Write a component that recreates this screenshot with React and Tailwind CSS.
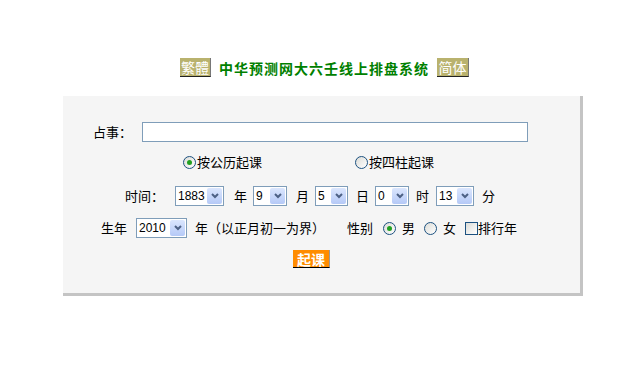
import React from 'react';

// little XP-style dropdown, drawn by hand
function Select({ value, width }) {
  return (
    <div
      className="flex h-[20px] items-center justify-between border border-[#7f9db9] bg-white pl-[2px] pr-[1px]"
      style={{ width }}
    >
      <span className="text-[12px] leading-none text-black [font-family:'Liberation_Sans',sans-serif]">{value}</span>
      <span className="flex h-[16px] w-[15px] items-center justify-center rounded-[2px] bg-gradient-to-b from-[#dbe6fd] to-[#b5c9f7]">
        <svg width="8" height="6" viewBox="0 0 8 6">
          <path d="M1 1 L4 4 L7 1" fill="none" stroke="#4d6185" strokeWidth="2" />
        </svg>
      </span>
    </div>
  );
}

function Radio({ checked }) {
  return (
    <span className="flex h-[13px] w-[13px] items-center justify-center rounded-full border border-[#1c5180] bg-gradient-to-br from-[#dcdcd7] to-white">
      {checked && <span className="h-[5px] w-[5px] rounded-full bg-[#21a121]" />}
    </span>
  );
}

export default function App() {
  return (
    <div className="h-[384px] w-[640px] bg-white pt-[58px] text-[13px] text-black [font-family:'Noto_Sans_CJK_SC',sans-serif]">
      {/* title */}
      <div className="flex h-[19px] items-center pl-[180px]">
        <span className="flex h-[19px] w-[31px] items-center justify-center border-b border-r border-b-[#222] border-r-[#777] bg-[#b9b26e] text-[14px] leading-none text-white">繁體</span>
        <span className="ml-[8px] text-[14px] font-bold leading-none tracking-[1px] text-[#008000]">中华预测网大六壬线上排盘系统</span>
        <span className="ml-[8px] flex h-[19px] w-[32px] items-center justify-center border-b border-r border-b-[#222] border-r-[#777] bg-[#b9b26e] text-[14px] leading-none text-white">简体</span>
      </div>

      {/* panel */}
      <div className="ml-[63px] mt-[19px] w-[520px] border-b-[3px] border-r-[3px] border-[#c4c4c4] bg-[#f5f5f5] pb-[25px] pt-[26px]">
        <div className="flex h-[20px] items-center pl-[30px]">
          <span className="w-[49px]">占事：</span>
          <div className="h-[20px] w-[386px] border border-[#7f9db9] bg-white" />
        </div>

        <div className="mt-[10px] flex h-[20px] items-center pl-[120px]">
          <Radio checked />
          <span className="ml-[1px]">按公历起课</span>
          <span className="ml-[93px]"><Radio /></span>
          <span className="ml-[1px]">按四柱起课</span>
        </div>

        <div className="mt-[14px] flex h-[20px] items-center pl-[62px]">
          <span>时间：</span>
          <span className="ml-[11px]"><Select value="1883" width={49} /></span>
          <span className="ml-[10px]">年</span>
          <span className="ml-[6px]"><Select value="9" width={34} /></span>
          <span className="ml-[9px]">月</span>
          <span className="ml-[6px]"><Select value="5" width={33} /></span>
          <span className="ml-[8px]">日</span>
          <span className="ml-[6px]"><Select value="0" width={34} /></span>
          <span className="ml-[7px]">时</span>
          <span className="ml-[7px]"><Select value="13" width={38} /></span>
          <span className="ml-[8px]">分</span>
        </div>

        <div className="mt-[12px] flex h-[20px] items-center pl-[38px]">
          <span>生年</span>
          <span className="ml-[9px]"><Select value="2010" width={51} /></span>
          <span className="ml-[8px]">年（以正月初一为界）</span>
          <span className="ml-[22px]">性别</span>
          <span className="ml-[10px]"><Radio checked /></span>
          <span className="ml-[6px]">男</span>
          <span className="ml-[9px]"><Radio /></span>
          <span className="ml-[6px]">女</span>
          <span className="ml-[9px] h-[13px] w-[13px] border border-[#1c5180] bg-gradient-to-br from-[#dcdcd7] to-white" />
          <span>排行年</span>
        </div>

        <div className="mt-[12px] flex h-[18px] pl-[230px]">
          <span className="flex h-[18px] w-[37px] items-center justify-center border-b border-r border-b-black border-r-[#999] bg-[#ff8c00] text-[14px] font-bold leading-none text-white">起课</span>
        </div>
      </div>
    </div>
  );
}
